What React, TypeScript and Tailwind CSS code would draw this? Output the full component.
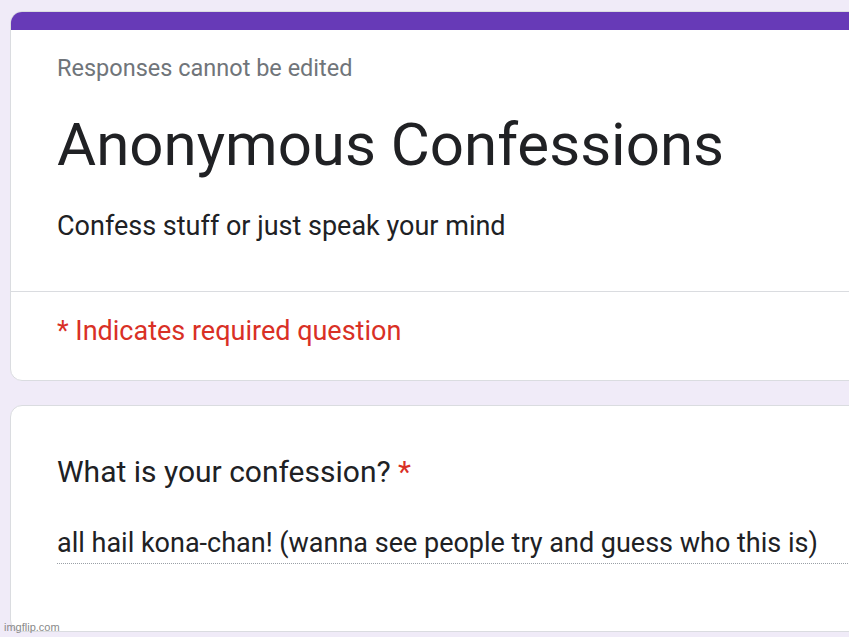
export default function App() {
  return (
    <div className="relative h-[637px] w-[849px] overflow-hidden bg-[#f0ebf8] pl-[10px] pt-[11px] font-['Roboto',sans-serif]">
      <div className="-mr-[20px] overflow-hidden rounded-[12px] border border-[#dadce0] bg-white">
        <div className="-mx-px -mt-px h-[19px] bg-[#673ab7]" />
        <div className="pl-[46px] pt-[24px] pb-[47px]">
          <div className="text-[23.5px] leading-[28px] text-[#70757a]">Responses cannot be edited</div>
          <h1 className="mt-[27px] text-[60px] leading-[72px] text-[#202124]">Anonymous Confessions</h1>
          <p className="mt-[27px] text-[27px] leading-[36px] text-[#202124]">Confess stuff or just speak your mind</p>
        </div>
        <div className="border-t border-[#dadce0] pl-[46px] pt-[21px] pb-[31px]">
          <div className="text-[27px] leading-[36px] text-[#d93025]">* Indicates required question</div>
        </div>
      </div>
      <div className="-mr-[20px] mt-[24px] h-[227px] rounded-[12px] border border-[#dadce0] bg-white pl-[46px] pt-[47px]">
        <div className="text-[30px] leading-[38px] text-[#202124]">
          What is your confession? <span className="text-[#d93025]">*</span>
        </div>
        <div className="mt-[34px] border-b border-dotted border-[#9aa0a6] pb-[2px] text-[27px] leading-[36px] text-[#202124]">
          all hail kona-chan! (wanna see people try and guess who this is)
        </div>
      </div>
      <div className="absolute bottom-[2px] left-[4px] font-['Liberation_Sans',sans-serif] text-[11px] text-[#8a8a8a]">imgflip.com</div>
    </div>
  );
}
